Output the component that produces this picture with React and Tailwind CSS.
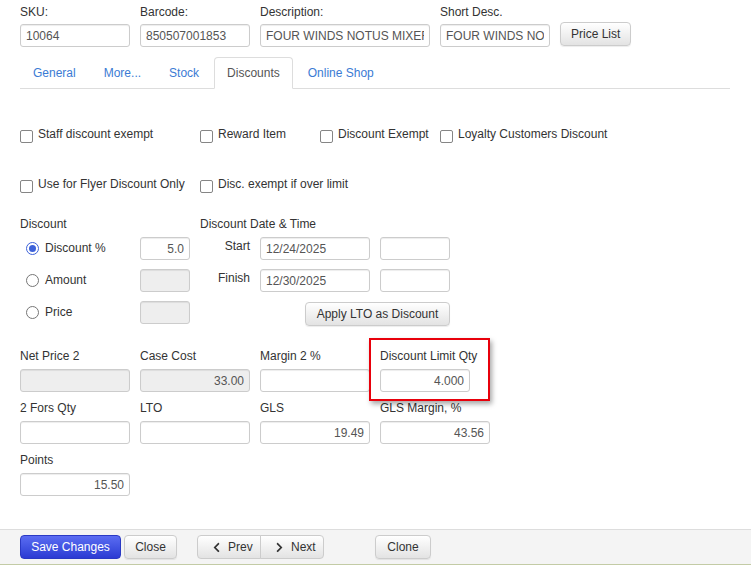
import React from "react";
import { FaChevronLeft, FaChevronRight } from "react-icons/fa";

const Inp = ({ w = "w-[110px]", value = "", right = false, disabled = false, cls = "" }) => (
  <input
    readOnly
    value={value}
    className={`${w} h-[23px] shrink-0 border border-[#ccc] rounded-[3px] px-[5px] text-[12px] text-[#555] outline-none shadow-[inset_0_1px_1px_rgba(0,0,0,0.075)] ${right ? "text-right" : "text-left"} ${disabled ? "bg-[#eee]" : "bg-white"} ${cls}`}
  />
);

const Btn = ({ children, cls = "" }) => (
  <button
    className={`h-[24px] shrink-0 border border-[#ccc] rounded-[4px] bg-gradient-to-b from-white to-[#e3e3e3] px-[10px] text-[12px] leading-[14px] text-[#333] shadow-[0_1px_1px_rgba(0,0,0,0.075)] ${cls}`}
  >
    {children}
  </button>
);

const Check = ({ label, w }) => (
  <div className={`flex items-start ${w}`}>
    <span className="mt-[3px] w-[13px] h-[13px] shrink-0 rounded-[2px] border border-[#858585] bg-white" />
    <span className="ml-[5px] leading-[14px] whitespace-nowrap">{label}</span>
  </div>
);

const Radio = ({ checked, label }) => (
  <div className="w-[120px] pt-[4px] pl-[6px]">
    <div className="flex items-center leading-[14px]">
      {checked ? (
        <span className="w-[13px] h-[13px] shrink-0 rounded-full border-[1.5px] border-[#3d62d9] bg-white flex items-center justify-center">
          <span className="w-[7px] h-[7px] rounded-full bg-[#3d62d9]" />
        </span>
      ) : (
        <span className="w-[13px] h-[13px] shrink-0 rounded-full border border-[#767676] bg-white" />
      )}
      <span className="ml-[6px] whitespace-nowrap">{label}</span>
    </div>
  </div>
);

const Field = ({ label, value, right, disabled, w }) => (
  <div className="mb-[9px]">
    <div className="leading-[14px] mb-[6px] whitespace-nowrap">{label}</div>
    <Inp value={value} right={right} disabled={disabled} w={w} />
  </div>
);

export default function App() {
  const tabs = ["General", "More...", "Stock", "Discounts", "Online Shop"];
  return (
    <div className="relative w-[751px] h-[565px] overflow-hidden bg-white text-[12px] text-[#333] font-['Liberation_Sans',Arial,sans-serif] flex flex-col">
      <div className="flex-1 px-[20px] pt-[5px]">
        {/* header */}
        <div className="flex items-end gap-[10px]">
          <div>
            <div className="leading-[14px] mb-[5px]">SKU:</div>
            <Inp value="10064" />
          </div>
          <div>
            <div className="leading-[14px] mb-[5px]">Barcode:</div>
            <Inp value="850507001853" />
          </div>
          <div>
            <div className="leading-[14px] mb-[5px]">Description:</div>
            <Inp w="w-[170px]" value="FOUR WINDS NOTUS MIXER 355ML" />
          </div>
          <div>
            <div className="leading-[14px] mb-[5px]">Short Desc.</div>
            <Inp value="FOUR WINDS NOTUS MIXER" />
          </div>
          <Btn cls="mb-[1px]">Price List</Btn>
        </div>

        {/* tabs */}
        <div className="mt-[10px] w-[710px] flex border-b border-[#ddd]">
          {tabs.map((t) =>
            t === "Discounts" ? (
              <div
                key={t}
                className="-mb-px mr-[2px] px-[12px] py-[8px] leading-[14px] border border-[#ddd] border-b-white rounded-t-[4px] bg-white text-[#555]"
              >
                {t}
              </div>
            ) : (
              <div
                key={t}
                className="-mb-px mr-[2px] px-[12px] py-[8px] leading-[14px] border border-transparent text-[#3b7bd4]"
              >
                {t}
              </div>
            )
          )}
        </div>

        {/* checkboxes */}
        <div className="mt-[38px] flex">
          <Check w="w-[180px]" label="Staff discount exempt" />
          <Check w="w-[120px]" label="Reward Item" />
          <Check w="w-[120px]" label="Discount Exempt" />
          <Check w="" label="Loyalty Customers Discount" />
        </div>
        <div className="mt-[34px] flex">
          <Check w="w-[180px]" label="Use for Flyer Discount Only" />
          <Check w="" label="Disc. exempt if over limit" />
        </div>

        {/* discount section */}
        <div className="mt-[24px] flex">
          <div className="w-[180px]">
            <div className="leading-[14px] mb-[6px]">Discount</div>
            <div className="flex h-[23px] mb-[9px]">
              <Radio checked label="Discount %" />
              <Inp w="w-[50px]" right value="5.0" />
            </div>
            <div className="flex h-[23px] mb-[9px]">
              <Radio label="Amount" />
              <Inp w="w-[50px]" right disabled />
            </div>
            <div className="flex h-[23px]">
              <Radio label="Price" />
              <Inp w="w-[50px]" right disabled />
            </div>
          </div>
          <div>
            <div className="leading-[14px] mb-[6px]">Discount Date &amp; Time</div>
            <div className="flex h-[23px] mb-[9px]">
              <div className="w-[50px] text-right pt-[2px] leading-[14px]">Start</div>
              <Inp value="12/24/2025" cls="ml-[10px]" />
              <Inp w="w-[70px]" cls="ml-[10px]" />
            </div>
            <div className="flex h-[23px] mb-[9px]">
              <div className="w-[50px] text-right pt-[2px] leading-[14px]">Finish</div>
              <Inp value="12/30/2025" cls="ml-[10px]" />
              <Inp w="w-[70px]" cls="ml-[10px]" />
            </div>
            <div className="flex">
              <Btn cls="ml-[105px] mt-[1px] w-[145px] px-[0px]">Apply LTO as Discount</Btn>
            </div>
          </div>
        </div>

        {/* grid fields */}
        <div className="mt-[23px] grid grid-cols-[110px_110px_110px_110px] gap-x-[10px]">
          <Field label="Net Price 2" disabled right />
          <Field label="Case Cost" disabled right value="33.00" />
          <Field label="Margin 2 %" right />
          <Field label="Discount Limit Qty" right value="4.000" w="w-[90px]" />
          <Field label="2 Fors Qty" right />
          <Field label="LTO" right />
          <Field label="GLS" right value="19.49" />
          <Field label="GLS Margin, %" right value="43.56" />
          <Field label="Points" right value="15.50" />
        </div>
      </div>

      {/* footer */}
      <div className="h-[36px] shrink-0 border-t border-[#ddd] border-b border-b-[#c3cba5] bg-[#f4f4f4] px-[20px] pt-[5px] flex items-start">
        <button className="h-[24px] w-[101px] border border-[#2a39c4] rounded-[4px] bg-gradient-to-b from-[#5b6cf2] to-[#2c3ad3] text-white text-[12px] leading-[14px]">
          Save Changes
        </button>
        <Btn cls="ml-[3px] w-[53px] px-[0px]">Close</Btn>
        <div className="ml-[20px] flex">
          <button className="h-[24px] w-[64px] border border-[#ccc] rounded-l-[4px] bg-gradient-to-b from-white to-[#e3e3e3] text-[12px] leading-[14px] text-[#333] flex items-center pl-[13px]">
            <FaChevronLeft size={11} className="text-[#333]" />
            <span className="ml-[6px]">Prev</span>
          </button>
          <button className="-ml-px h-[24px] w-[64px] border border-[#ccc] rounded-r-[4px] bg-gradient-to-b from-white to-[#e3e3e3] text-[12px] leading-[14px] text-[#333] flex items-center pl-[13px]">
            <FaChevronRight size={11} className="text-[#333]" />
            <span className="ml-[6px]">Next</span>
          </button>
        </div>
        <Btn cls="ml-[51px] w-[56px] px-[0px]">Clone</Btn>
      </div>

      {/* annotation highlight */}
      <div className="absolute left-[369px] top-[338px] w-[121px] h-[63px] border-2 border-[#e8000b] shadow-[2px_3px_5px_rgba(0,0,0,0.35)] pointer-events-none" />
    </div>
  );
}
